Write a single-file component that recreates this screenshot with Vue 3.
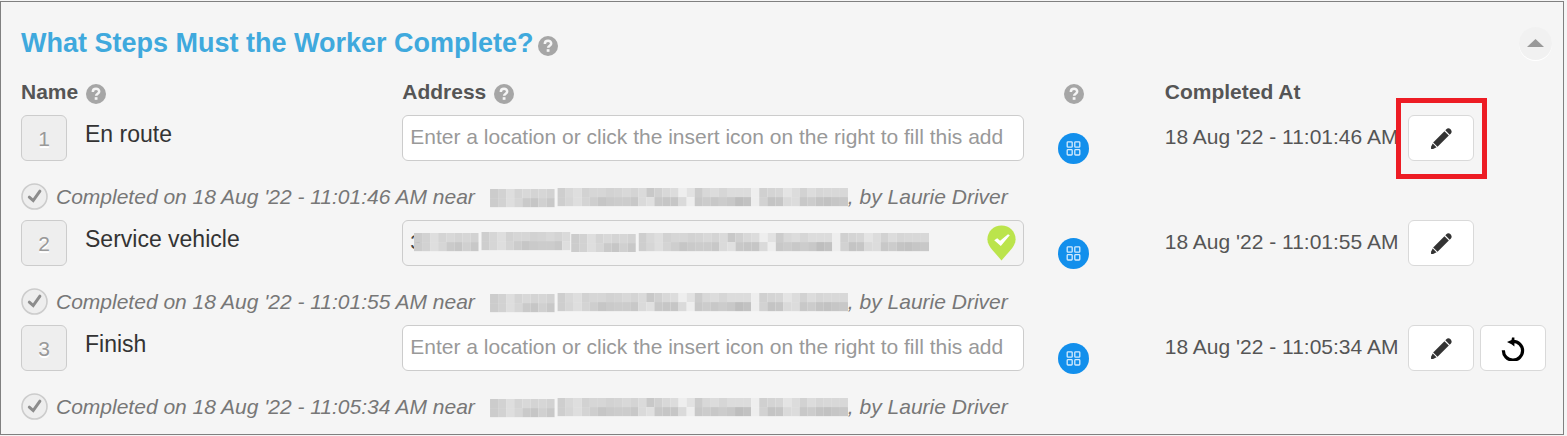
<script setup>
import { ref } from 'vue'

const open = ref(true)

// Grey levels of the privacy mosaics, one list per line of 8px tiles
const wordTop = [204, 210, 222, 212, 216, 212, 214, 210]
const wordBottom = [204, 210, 222, 214, 202, 198, 208, 200]
const midTop = [206, 214, 222, 210, 214, 214, 210, 212, 216, 212, 218]
const midBottom = [206, 214, 222, 212, 204, 198, 202, 204, 204, 200, 222]
const longTop = [
  206, 216, 222, 210, 214, 214, 210, 212, 216, 212, 218, 200, 208, 216, 220, 238, 226, 204,
  216, 220, 214, 220, 220, 220, 238, 208, 212, 214, 228, 220, 210, 220, 214, 216, 216, 216,
]
const longBottom = [
  206, 214, 222, 212, 206, 198, 202, 204, 204, 200, 218, 224, 200, 198, 198, 218, 238, 200,
  204, 200, 204, 200, 190, 194, 238, 210, 196, 198, 218, 220, 200, 204, 196, 194, 198, 200,
]

function tiles(x, y, top, bottom) {
  return [top, bottom].flatMap((line, row) =>
    line.map((v, i) => ({ x: x + i * 8, y: y + row * 9, fill: `rgb(${v},${v},${v})` })),
  )
}

const noteTiles = [...tiles(0, 1, wordTop, wordBottom), ...tiles(67, 0, longTop, longBottom)]
const fieldTiles = [
  ...tiles(0, 1, wordTop, wordBottom),
  ...tiles(67, 0, midTop, midBottom),
  ...tiles(156, 2, wordTop, wordBottom),
  ...tiles(223, 1, longTop, longBottom),
]

const hint = 'Enter a location or click the insert icon on the right to fill this add'
const steps = ref([
  { id: 1, name: 'En route', address: '', done: "18 Aug '22 - 11:01:46 AM", marked: true },
  { id: 2, name: 'Service vehicle', address: '3', done: "18 Aug '22 - 11:01:55 AM" },
  { id: 3, name: 'Finish', address: '', done: "18 Aug '22 - 11:05:34 AM", undo: true },
])
</script>

<template>
  <section class="panel">
    <header class="head">
      <h2>What Steps Must the Worker Complete?</h2>
      <button class="help" type="button" aria-label="Help: steps">
        <svg viewBox="0 0 20 20"><circle cx="10" cy="10" r="10" fill="#a6a6a6" /><path d="M6.8 7.9C6.8 3.7 13.4 3.9 13.2 7.6C13.1 9.6 10.2 9.7 10.1 11.8" fill="none" stroke="#f5f5f5" stroke-width="2.5" /><rect x="8.7" y="13.2" width="2.8" height="2.6" fill="#f5f5f5" /></svg>
      </button>
      <button class="collapse" type="button" aria-label="Collapse" :aria-expanded="open" @click="open = !open">
        <svg viewBox="0 0 17 8"><path d="M8.5 0L17 8H0z" fill="#999" /></svg>
      </button>
    </header>

    <table v-show="open" class="steps">
      <colgroup>
        <col class="c-name" /><col class="c-address" /><col class="c-insert" /><col />
      </colgroup>
      <thead>
        <tr>
          <th v-for="(title, i) in ['Name', 'Address', '', 'Completed At']" :key="i" scope="col">
            <div class="label" :class="{ lone: !title }">
              <span v-if="title">{{ title }}</span>
              <button v-if="i < 3" class="help" type="button" :aria-label="'Help: ' + (title || 'Insert')">
                <svg viewBox="0 0 20 20"><circle cx="10" cy="10" r="10" fill="#a6a6a6" /><path d="M6.8 7.9C6.8 3.7 13.4 3.9 13.2 7.6C13.1 9.6 10.2 9.7 10.1 11.8" fill="none" stroke="#f5f5f5" stroke-width="2.5" /><rect x="8.7" y="13.2" width="2.8" height="2.6" fill="#f5f5f5" /></svg>
              </button>
            </div>
          </th>
        </tr>
      </thead>
      <tbody v-for="step in steps" :key="step.id">
        <tr class="step">
          <td>
            <div class="title">
              <span class="number">{{ step.id }}</span>
              <label class="name" :for="'address-' + step.id">{{ step.name }}</label>
            </div>
          </td>
          <td>
            <div class="field">
              <input
                :id="'address-' + step.id"
                v-model="step.address"
                type="text"
                :class="{ filled: step.address }"
                :placeholder="hint"
              />
              <template v-if="step.id === 2">
                <svg class="hidden-address" viewBox="0 0 511 20" aria-hidden="true">
                  <rect v-for="(t, i) in fieldTiles" :key="i" :x="t.x" :y="t.y" width="8" height="9" :fill="t.fill" />
                </svg>
                <svg class="pin" viewBox="0 0 29 36" aria-hidden="true">
                  <path d="M14.5 0.4C22.5 0.4 28.6 6.5 28.6 14.2C28.6 18.6 26.3 21.8 23.4 25.2L14.5 35.4L5.6 25.2C2.7 21.8 0.4 18.6 0.4 14.2C0.4 6.5 6.5 0.4 14.5 0.4z" fill="#bbe44c" />
                  <path d="M7.2 15.2L10.2 13.3L13.1 15.8L21 9.2L22.8 10.2L13.8 21z" fill="#fff" />
                </svg>
              </template>
            </div>
          </td>
          <td>
            <button class="insert" type="button" aria-label="Insert">
              <svg viewBox="0 0 31 31" fill="none" stroke="#d5ebfd" stroke-width="1.3">
                <rect x="9.2" y="8.8" width="5" height="5.4" rx="0.8" /><rect x="16.8" y="8.8" width="5" height="5.4" rx="0.8" />
                <rect x="9.2" y="16.6" width="5" height="5.4" rx="0.8" /><rect x="16.8" y="16.6" width="5" height="5.4" rx="0.8" />
              </svg>
            </button>
          </td>
          <td>
            <div class="done">
              <time>{{ step.done }}</time>
              <button class="action" :class="{ marked: step.marked }" type="button" aria-label="Edit">
                <svg viewBox="0 0 24 24" fill="#333">
                  <g transform="translate(12 12) rotate(-45)">
                    <path d="M-14 0L-12.6 -1.5L-9 -2.7V2.7L-12.6 1.5z" />
                    <path d="M-8 -3.1H8V3.1H-8z" />
                    <path d="M9.2 -3.1H11C14.4 -3.1 14.4 3.1 11 3.1H9.2z" />
                  </g>
                </svg>
              </button>
              <button v-if="step.undo" class="action" type="button" aria-label="Undo">
                <svg viewBox="0 0 24 24">
                  <path d="M2.4 13.3A9.6 9.4 0 1 0 12 4.3" fill="none" stroke="#000" stroke-width="3.2" />
                  <path d="M6 4.9L10.5 2.9L11 0.6H13.4V9.4L10.5 7.3z" fill="#000" />
                </svg>
              </button>
            </div>
          </td>
        </tr>
        <tr>
          <td colspan="4">
            <div class="note">
              <svg class="tick" viewBox="0 0 27 27" aria-hidden="true">
                <circle cx="13.5" cy="13.5" r="12.5" fill="#eee" stroke="#ccc" stroke-width="1.6" />
                <path d="M8.3 14.2L12.2 17.6L18.9 8.2" fill="none" stroke="#8c8c8c" stroke-width="3" stroke-linecap="round" />
              </svg>
              <em>Completed on {{ step.done }} near</em>
              <svg class="hidden-place" viewBox="0 0 355 19" aria-hidden="true">
                <rect v-for="(t, i) in noteTiles" :key="i" :x="t.x" :y="t.y" width="8" height="9" :fill="t.fill" />
              </svg>
              <em>, by Laurie Driver</em>
            </div>
          </td>
        </tr>
      </tbody>
    </table>
  </section>
</template>

<style>
body {
  background: #f5f5f5;
}
</style>

<style scoped>
.panel {
  margin: 1px 3px 0 0;
  padding: 23px 0 4px 20px;
  border: 1px solid #808080;
  background: #f5f5f5;
  color: #555;
  font-family: 'Liberation Sans', Arial, sans-serif;
  font-size: 21px;
  line-height: 28px;
}
button {
  padding: 0;
  border: 0;
  background: none;
  font: inherit;
  cursor: pointer;
}
svg {
  display: block;
  flex: none;
}
.head {
  display: flex;
  align-items: center;
  gap: 4px;
  margin-bottom: 17px;
  padding-right: 11px;
}
h2 {
  margin: 0;
  color: #3fa9dd;
  font-size: 27px;
  line-height: 36px;
}
.help {
  flex: none;
  width: 20px;
  height: 20px;
  margin-top: 3px;
}
.head .help {
  margin-top: 6px;
}
.collapse {
  display: flex;
  align-items: center;
  justify-content: center;
  width: 33px;
  height: 33px;
  margin-left: auto;
  border-radius: 50%;
  background: #f1f1f1;
  box-shadow: 0 1px 0 #fff;
}
.collapse svg {
  width: 17px;
}
.steps {
  width: calc(100% - 17px);
  border-collapse: collapse;
  table-layout: fixed;
}
.c-name {
  width: 25%;
}
.c-address {
  width: 43%;
}
.c-insert {
  width: 7%;
}
th,
td {
  padding: 0;
  text-align: left;
  vertical-align: top;
}
.label {
  display: flex;
  align-items: center;
  gap: 8px;
  height: 28px;
  margin-bottom: 9px;
}
.lone {
  padding-left: 6px;
}
.step {
  height: 49px;
}
.title {
  display: flex;
  gap: 18px;
}
.number {
  display: flex;
  align-items: center;
  justify-content: center;
  box-sizing: border-box;
  width: 46px;
  height: 46px;
  padding-top: 2px;
  border: 1px solid #ccc;
  border-radius: 6px;
  background: #eee;
  color: #999;
  text-shadow: 0 2px 0 #fff;
}
.name {
  padding-top: 5px;
  color: #333;
  font-size: 23px;
}
.field {
  position: relative;
  margin-right: 34px;
}
input {
  display: block;
  box-sizing: border-box;
  width: 100%;
  height: 46px;
  padding: 0 7px 2px;
  border: 1px solid #ccc;
  border-radius: 6px;
  background: #fff;
  color: #444;
  font: inherit;
}
input.filled {
  background: #f4f4f4;
}
input::placeholder {
  color: #999;
  opacity: 1;
}
.hidden-address {
  position: absolute;
  top: 12px;
  left: 12px;
  width: 515px;
}
.pin {
  position: absolute;
  top: 5px;
  right: 8px;
  width: 29px;
}
.insert {
  display: block;
  width: 31px;
  height: 31px;
  margin-top: 18px;
  border-radius: 50%;
  background: #128fec;
}
.done {
  display: flex;
  gap: 6px;
  white-space: nowrap;
}
time {
  margin-right: 4px;
  padding-top: 8px;
}
.action {
  position: relative;
  display: flex;
  flex: none;
  align-items: center;
  justify-content: center;
  box-sizing: border-box;
  width: 66px;
  height: 46px;
  border: 1px solid #d9d9d9;
  border-radius: 6px;
  background: #fff;
}
.action svg {
  width: 24px;
  margin-top: 2px;
}
.marked::after {
  content: '';
  position: absolute;
  inset: -18px -14px -19px -13px;
  border: 5px solid #ed1c24;
  pointer-events: none;
}
.note {
  display: flex;
  align-items: center;
  height: 27px;
  padding: 19px 0 10px;
  color: #777;
  white-space: nowrap;
}
.tick {
  width: 27px;
  margin-right: 8px;
}
.hidden-place {
  width: 358px;
  margin: 3px 0 0 15px;
}
</style>
